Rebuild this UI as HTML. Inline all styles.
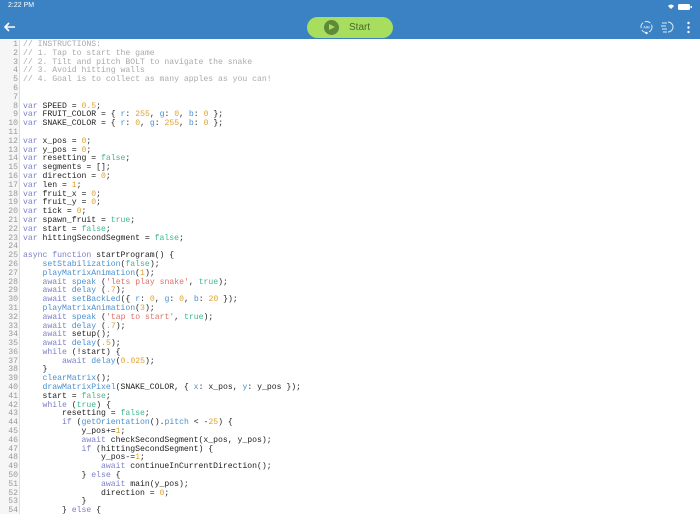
<!DOCTYPE html>
<html><head><meta charset="utf-8"><style>
*{margin:0;padding:0;box-sizing:border-box}
body{width:700px;height:525px;overflow:hidden;background:#fff;font-family:"Liberation Sans",sans-serif;position:relative}
.top{position:absolute;left:0;top:0;width:700px;height:39px;background:#3a82c4}
.time{position:absolute;left:8px;top:2px;color:#fff;font-size:7px}
.btn{position:absolute;left:307px;top:17px;width:86px;height:21px;background:#a8de5e;border-radius:11px}
.btn .pl{position:absolute;left:17px;top:3px;width:15px;height:15px;border-radius:50%;background:#5f8a3a}
.btn .pl:after{content:"";position:absolute;left:5px;top:4px;border-left:6px solid #a8de5e;border-top:3.5px solid transparent;border-bottom:3.5px solid transparent}
.btn span{position:absolute;left:42px;top:5px;font-size:10px;color:#4a6a30}
.code{position:absolute;left:0;top:40px;width:700px;height:474px;overflow:hidden}
.gut{position:absolute;left:0;top:0;width:20px;height:474px;background:#f6f6f6;border-right:1px solid #ddd}
pre{font-family:"Liberation Mono",monospace;font-size:8.15px;line-height:8.79px;position:absolute;top:1px;color:#222}
.num{left:0;width:18px;text-align:right;color:#999}
.src{left:23px}
.c{color:#aaa}.k{color:#7c80c8}.f{color:#4a90d0}.s{color:#dc7068}.n{color:#e0a22c}.b{color:#3eb88a}
</style></head><body>
<div class="top"><div class="time">2:22 PM</div>
<svg style="position:absolute;left:668px;top:3px" width="26" height="8"><path d="M3 6 L0 3 Q3 0 6 3Z" fill="#fff"/><rect x="10" y="1" width="12" height="6" rx="1.5" fill="#fff"/><rect x="22.5" y="3" width="1.5" height="2" fill="#fff"/></svg>
<svg style="position:absolute;left:3px;top:21px" width="14" height="12"><path d="M12 6H2M6 2L2 6L6 10" stroke="#fff" stroke-width="1.6" fill="none"/></svg>
<div class="btn"><div class="pl"></div><span>Start</span></div>
<svg style="position:absolute;left:639px;top:20px" width="15" height="15"><circle cx="7.5" cy="7" r="5.5" stroke="#dde9f5" stroke-width="1" fill="none" stroke-dasharray="6 2"/><text x="7.5" y="8.5" font-size="3.5" fill="#fff" text-anchor="middle" font-family="Liberation Sans">AIM</text><circle cx="7.5" cy="13" r="1.2" fill="#fff"/></svg>
<svg style="position:absolute;left:661px;top:20px" width="14" height="14"><path d="M1 3h5M0 6h5M1 9h5M2 12h4" stroke="#dde9f5" stroke-width="1"/><path d="M7 2a5 5 0 0 1 0 10" stroke="#dde9f5" fill="none"/></svg>
<svg style="position:absolute;left:686px;top:21px" width="5" height="13"><circle cx="2.5" cy="2" r="1.2" fill="#fff"/><circle cx="2.5" cy="6.5" r="1.2" fill="#fff"/><circle cx="2.5" cy="11" r="1.2" fill="#fff"/></svg>
</div>
<div class="code"><div class="gut"></div>
<pre class="num">1
2
3
4
5
6
7
8
9
10
11
12
13
14
15
16
17
18
19
20
21
22
23
24
25
26
27
28
29
30
31
32
33
34
35
36
37
38
39
40
41
42
43
44
45
46
47
48
49
50
51
52
53
54
55</pre>
<pre class="src"><span class="c">// INSTRUCTIONS:
// 1. Tap to start the game
// 2. Tilt and pitch BOLT to navigate the snake
// 3. Avoid hitting walls
// 4. Goal is to collect as many apples as you can!</span>


<span class="k">var</span> SPEED = <span class="n">0.5</span>;
<span class="k">var</span> FRUIT_COLOR = { <span class="f">r</span>: <span class="n">255</span>, <span class="f">g</span>: <span class="n">0</span>, <span class="f">b</span>: <span class="n">0</span> };
<span class="k">var</span> SNAKE_COLOR = { <span class="f">r</span>: <span class="n">0</span>, <span class="f">g</span>: <span class="n">255</span>, <span class="f">b</span>: <span class="n">0</span> };

<span class="k">var</span> x_pos = <span class="n">0</span>;
<span class="k">var</span> y_pos = <span class="n">0</span>;
<span class="k">var</span> resetting = <span class="b">false</span>;
<span class="k">var</span> segments = [];
<span class="k">var</span> direction = <span class="n">0</span>;
<span class="k">var</span> len = <span class="n">1</span>;
<span class="k">var</span> fruit_x = <span class="n">0</span>;
<span class="k">var</span> fruit_y = <span class="n">0</span>;
<span class="k">var</span> tick = <span class="n">0</span>;
<span class="k">var</span> spawn_fruit = <span class="b">true</span>;
<span class="k">var</span> start = <span class="b">false</span>;
<span class="k">var</span> hittingSecondSegment = <span class="b">false</span>;

<span class="k">async function</span> startProgram() {
    <span class="f">setStabilization</span>(<span class="b">false</span>);
    <span class="f">playMatrixAnimation</span>(<span class="n">1</span>);
    <span class="k">await</span> <span class="f">speak</span> (<span class="s">'lets play snake'</span>, <span class="b">true</span>);
    <span class="k">await</span> <span class="f">delay</span> (<span class="n">.7</span>);
    <span class="k">await</span> <span class="f">setBackLed</span>({ <span class="f">r</span>: <span class="n">0</span>, <span class="f">g</span>: <span class="n">0</span>, <span class="f">b</span>: <span class="n">20</span> });
    <span class="f">playMatrixAnimation</span>(<span class="n">3</span>);
    <span class="k">await</span> <span class="f">speak</span> (<span class="s">'tap to start'</span>, <span class="b">true</span>);
    <span class="k">await</span> <span class="f">delay</span> (<span class="n">.7</span>);
    <span class="k">await</span> setup();
    <span class="k">await</span> <span class="f">delay</span>(<span class="n">.5</span>);
    <span class="k">while</span> (!start) {
        <span class="k">await</span> <span class="f">delay</span>(<span class="n">0.025</span>);
    }
    <span class="f">clearMatrix</span>();
    <span class="f">drawMatrixPixel</span>(SNAKE_COLOR, { <span class="f">x</span>: x_pos, <span class="f">y</span>: y_pos });
    start = <span class="b">false</span>;
    <span class="k">while</span> (<span class="b">true</span>) {
        resetting = <span class="b">false</span>;
        <span class="k">if</span> (<span class="f">getOrientation</span>().<span class="f">pitch</span> &lt; -<span class="n">25</span>) {
            y_pos+=<span class="n">1</span>;
            <span class="k">await</span> checkSecondSegment(x_pos, y_pos);
            <span class="k">if</span> (hittingSecondSegment) {
                y_pos-=<span class="n">1</span>;
                <span class="k">await</span> continueInCurrentDirection();
            } <span class="k">else</span> {
                <span class="k">await</span> main(y_pos);
                direction = <span class="n">0</span>;
            }
        } <span class="k">else</span> {
            <span class="k">if</span> (<span class="f">getOrientation</span>().<span class="f">pitch</span> &gt; <span class="n">25</span>) {</pre>
</div>
</body></html>
